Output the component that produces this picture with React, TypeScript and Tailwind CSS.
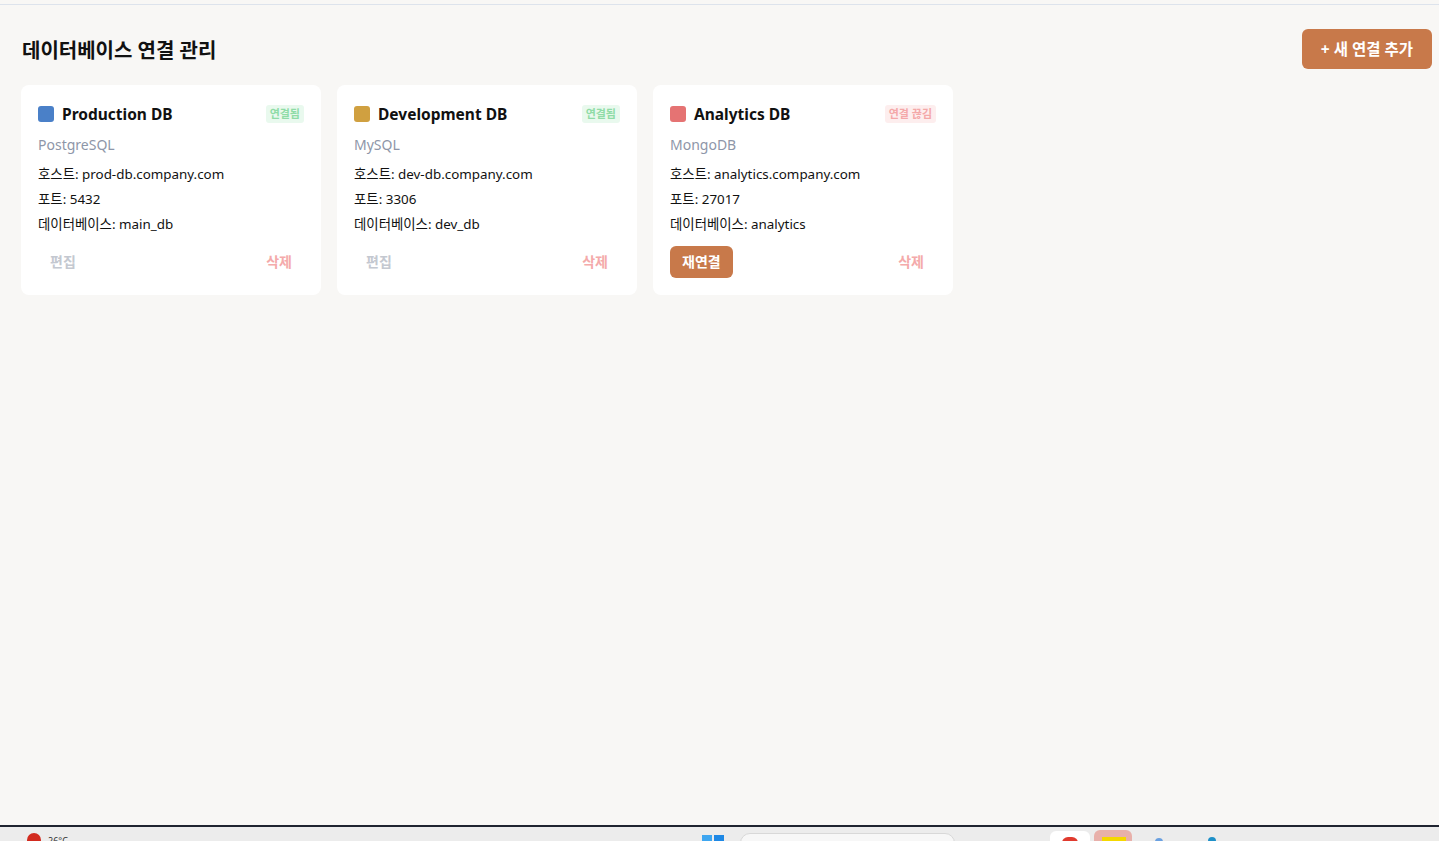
import React from 'react';

type Conn = {
  name: string;
  engine: string;
  host: string;
  port: string;
  db: string;
  color: string;
  connected: boolean;
};

const connections: Conn[] = [
  { name: 'Production DB', engine: 'PostgreSQL', host: 'prod-db.company.com', port: '5432', db: 'main_db', color: 'bg-[#4a80c8]', connected: true },
  { name: 'Development DB', engine: 'MySQL', host: 'dev-db.company.com', port: '3306', db: 'dev_db', color: 'bg-[#d0a040]', connected: true },
  { name: 'Analytics DB', engine: 'MongoDB', host: 'analytics.company.com', port: '27017', db: 'analytics', color: 'bg-[#e57373]', connected: false },
];

const ConnectionCard: React.FC<{ conn: Conn }> = ({ conn }) => (
  <div className="w-[300px] rounded-lg bg-white p-[17px]">
    <div className="flex h-6 items-center justify-between">
      <div className="flex items-center gap-2">
        <span className={`h-4 w-4 rounded-[3px] ${conn.color}`} />
        <span className="pt-[2px] text-[15.5px] font-bold text-[#111]">{conn.name}</span>
      </div>
      {conn.connected ? (
        <span className="rounded-[3px] bg-[#e9f9ee] px-[4px] text-[11px] font-bold leading-[18px] text-[#8fdca6]">연결됨</span>
      ) : (
        <span className="rounded-[3px] bg-[#fdeeee] px-[4px] text-[11px] font-bold leading-[18px] text-[#f4a8a8]">연결 끊김</span>
      )}
    </div>
    <p className="mt-[9px] text-[14px] leading-5 text-[#8e96a8]">{conn.engine}</p>
    <div className="mt-[9px] flex flex-col gap-[5px] text-[13.4px] leading-5 text-[#111]">
      <p>호스트: {conn.host}</p>
      <p>포트: {conn.port}</p>
      <p>데이터베이스: {conn.db}</p>
    </div>
    <div className="mt-3 flex h-8 items-center justify-between">
      {conn.connected ? (
        <button className="h-8 px-3 text-[14px] font-bold leading-none text-[#c4c8d0]">편집</button>
      ) : (
        <button className="h-8 rounded-md bg-[#c8794a] px-3 text-[14px] font-bold leading-none text-white">재연결</button>
      )}
      <button className="h-8 px-3 text-[14px] font-bold leading-none text-[#f4aaaa]">삭제</button>
    </div>
  </div>
);

export default function App() {
  return (
    <div
      className="flex h-[841px] flex-col overflow-hidden bg-[#f8f7f5]"
      style={{ fontFamily: '"Noto Sans", "Noto Sans CJK KR", sans-serif' }}
    >
      <div className="mt-1 border-t border-[#dde3ec]" />
      <main className="flex-1 pl-[21px] pr-[7px]">
        <header className="mt-6 flex h-10 items-center justify-between">
          <h1 className="pl-px pt-[3px] text-[20px] font-bold leading-none text-[#111]">데이터베이스 연결 관리</h1>
          <button className="h-10 rounded-md bg-[#c8794a] px-[19px] pt-[2px] text-[15.5px] font-bold leading-none text-white">+ 새 연결 추가</button>
        </header>
        <section className="mt-4 flex gap-4">
          {connections.map((c) => (
            <ConnectionCard key={c.name} conn={c} />
          ))}
        </section>
      </main>
      <footer className="relative h-4 border-t-2 border-[#1f2430] bg-[#ececec]">
        <span className="absolute left-[27px] top-[6px] h-[14px] w-[14px] rounded-full bg-[#d22b1f]" />
        <span className="absolute left-[48px] top-[9px] text-[9px] leading-none text-[#333]">26°C</span>
        <span className="absolute left-[702px] top-[8px] h-2 w-[10px] bg-[#3ea6f0]" />
        <span className="absolute left-[714px] top-[8px] h-2 w-[10px] bg-[#1e88e5]" />
        <span className="absolute left-[740px] top-[6px] h-5 w-[215px] rounded-full border border-[#d8d8d8] bg-[#f7f7f7]" />
        <span className="absolute left-[1050px] top-[4px] h-5 w-[40px] rounded-md bg-white" />
        <span className="absolute left-[1062px] top-[10px] h-3 w-4 rounded-full bg-[#e03a2e]" />
        <span className="absolute left-[1094px] top-[3px] h-5 w-[38px] rounded-md bg-[#e8b0aa]" />
        <span className="absolute left-[1102px] top-[10px] h-3 w-6 bg-[#f5d800]" />
        <span className="absolute left-[1155px] top-[11px] h-2 w-2 rounded-full bg-[#6aa0e0]" />
        <span className="absolute left-[1208px] top-[10px] h-2 w-2 rounded-full bg-[#1e90c8]" />
      </footer>
    </div>
  );
}
